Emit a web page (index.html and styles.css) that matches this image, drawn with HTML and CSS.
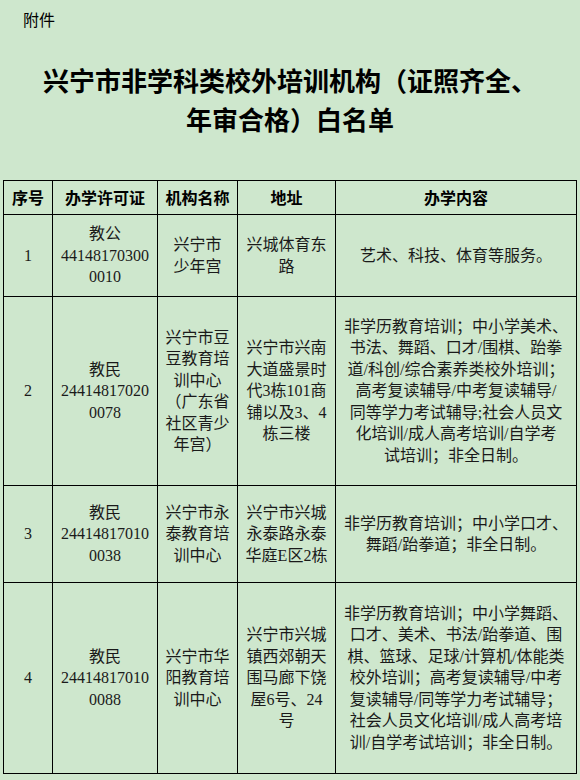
FILE: index.html
```html
<!DOCTYPE html>
<html lang="zh-CN">
<head>
<meta charset="utf-8">
<title>兴宁市非学科类校外培训机构白名单</title>
<link rel="stylesheet" href="styles.css">
</head>
<body>
<div class="page">
  <div class="annex">附件</div>
  <h1 class="title">兴宁市非学科类校外培训机构（证照齐全、<br>年审合格）白名单</h1>
  <table class="list">
    <colgroup>
      <col class="c1"><col class="c2"><col class="c3"><col class="c4"><col class="c5">
    </colgroup>
    <thead>
      <tr class="rh">
        <th>序号</th><th>办学许可证</th><th>机构名称</th><th>地址</th><th>办学内容</th>
      </tr>
    </thead>
    <tbody>
      <tr class="r1">
        <td>1</td>
        <td>教公<br>44148170300<br>0010</td>
        <td>兴宁市<br>少年宫</td>
        <td>兴城体育东<br>路</td>
        <td>艺术、科技、体育等服务。</td>
      </tr>
      <tr class="r2">
        <td>2</td>
        <td>教民<br>24414817020<br>0078</td>
        <td>兴宁市豆<br>豆教育培<br>训中心<br>（广东省<br>社区青少<br>年宫）</td>
        <td>兴宁市兴南<br>大道盛景时<br>代3栋101商<br>铺以及3、4<br>栋三楼</td>
        <td>非学历教育培训；中小学美术、<br>书法、舞蹈、口才/围棋、跆拳<br>道/科创/综合素养类校外培训；<br>高考复读辅导/中考复读辅导/<br>同等学力考试辅导;社会人员文<br>化培训/成人高考培训/自学考<br>试培训；非全日制。</td>
      </tr>
      <tr class="r3">
        <td>3</td>
        <td>教民<br>24414817010<br>0038</td>
        <td>兴宁市永<br>泰教育培<br>训中心</td>
        <td>兴宁市兴城<br>永泰路永泰<br>华庭E区2栋</td>
        <td>非学历教育培训；中小学口才、<br>舞蹈/跆拳道；非全日制。</td>
      </tr>
      <tr class="r4">
        <td>4</td>
        <td>教民<br>24414817010<br>0088</td>
        <td>兴宁市华<br>阳教育培<br>训中心</td>
        <td>兴宁市兴城<br>镇西郊朝天<br>围马廊下饶<br>屋6号、24<br>号</td>
        <td>非学历教育培训；中小学舞蹈、<br>口才、美术、书法/跆拳道、围<br>棋、篮球、足球/计算机/体能类<br>校外培训；高考复读辅导/中考<br>复读辅导/同等学力考试辅导；<br>社会人员文化培训/成人高考培<br>训/自学考试培训；非全日制。</td>
      </tr>
    </tbody>
  </table>
</div>
</body>
</html>
```

FILE: styles.css
```css
html, body {
  margin: 0;
  padding: 0;
  background: #cee7cd;
}

.page {
  width: 580px;
  height: 780px;
  padding: 8px 3px 0 3px;
  box-sizing: border-box;
  color: #000;
  font-family: "Liberation Serif", "Noto Sans CJK SC", serif;
}

.annex {
  margin-left: 20px;
  font-family: "Noto Sans CJK SC", sans-serif;
  font-size: 16px;
  line-height: 22px;
}

.title {
  margin: 30px 0 0 0;
  text-align: center;
  font-family: "Noto Sans CJK SC", sans-serif;
  font-size: 26px;
  line-height: 39px;
  font-weight: 700;
}

.list {
  margin-top: 42px;
  width: 574px;
  table-layout: fixed;
  border-collapse: collapse;
  border: 1px solid #000;
  font-size: 16px;
  line-height: 21.5px;
}

.c1 { width: 49px; }
.c2 { width: 105px; }
.c3 { width: 80px; }
.c4 { width: 98px; }
.c5 { width: 241px; }

.list th,
.list td {
  border: 1px solid #000;
  padding: 0 2px;
  text-align: center;
  vertical-align: middle;
  white-space: nowrap;
  font-family: "Liberation Serif", "Noto Sans CJK SC", serif;
}

.list th {
  font-weight: 700;
  font-family: "Noto Sans CJK SC", sans-serif;
}

.list td {
  font-weight: 400;
  color: #1a1a1a;
}

.rh { height: 34px; }
.r1 { height: 82px; }
.r2 { height: 189px; }
.r3 { height: 97px; }
.r4 { height: 191px; }
```
